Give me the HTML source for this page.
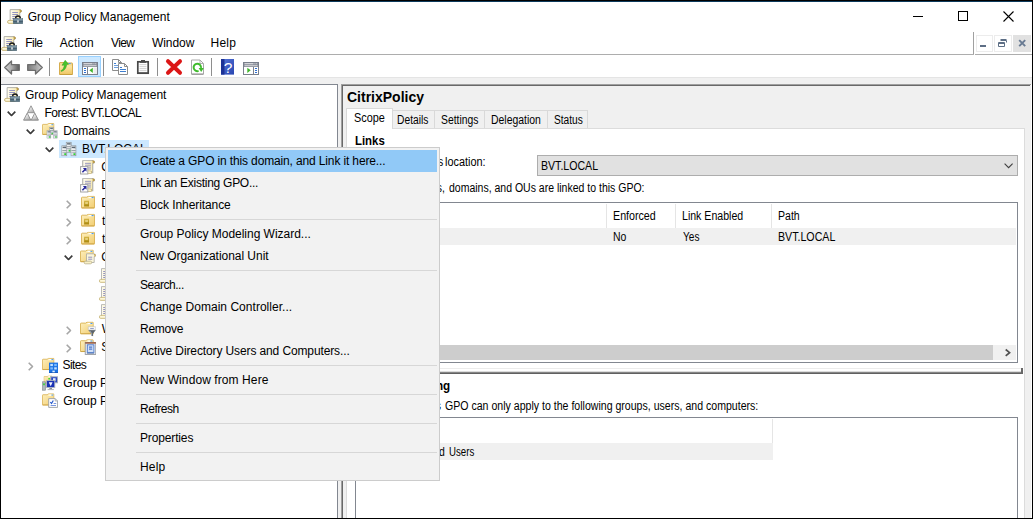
<!DOCTYPE html>
<html>
<head>
<meta charset="utf-8">
<title>Group Policy Management</title>
<style>
html,body{margin:0;padding:0;}
body{width:1033px;height:519px;position:relative;overflow:hidden;background:#fff;font-family:"Liberation Sans",sans-serif;font-size:12px;color:#000;}
.abs{position:absolute;}
.t{position:absolute;white-space:nowrap;line-height:16px;height:16px;transform-origin:0 0;}
.b{font-weight:bold;}
.ttl{font-size:14px;font-weight:bold;}
.seg{font-size:12px;}
.ms{font-size:12px;}
svg{position:absolute;overflow:visible;}
#frame{left:0;top:0;width:1033px;height:519px;box-sizing:border-box;border:1px solid #000;z-index:50;}
.msep{left:136px;width:301px;height:1px;background:#d7d7d7;}
</style>
</head>
<body>
<!-- title bar -->
<div class="abs" style="left:0;top:0;width:1033px;height:32px;background:#fff;"></div>
<svg style="left:900px;top:0;" width="133" height="32" viewBox="0 0 133 32">
  <path d="M13 16.5h10" stroke="#000" stroke-width="1" fill="none"/>
  <rect x="58.5" y="11.5" width="9" height="9" stroke="#000" stroke-width="1" fill="none"/>
  <path d="M103.5 11.5l10 10M113.5 11.5l-10 10" stroke="#000" stroke-width="1.1" fill="none"/>
</svg>
<!-- menu bar -->
<div class="abs" style="left:1px;top:32px;width:1031px;height:22px;background:#fff;"></div>
<div class="abs" style="left:1px;top:54px;width:1031px;height:1px;background:#adadad;"></div>
<div class="abs" style="left:973px;top:32px;width:1px;height:22px;background:#a0a0a0;"></div>
<div class="abs" style="left:974px;top:32px;width:58px;height:23px;background:#fff;"></div>
<div class="abs" style="left:975px;top:54px;width:57px;height:1px;background:#adadad;"></div>
<!-- MDI buttons -->
<div class="abs" style="left:976px;top:35px;width:17px;height:17px;box-sizing:border-box;border:1px solid #ececec;background:#fff;"></div>
<div class="abs" style="left:994px;top:35px;width:18px;height:17px;box-sizing:border-box;border:1px solid #ececec;background:#fff;"></div>
<div class="abs" style="left:1013px;top:35px;width:18px;height:17px;background:#e1e1e1;"></div>
<svg style="left:976px;top:35px;" width="55" height="17" viewBox="0 0 55 17">
  <rect x="4" y="10" width="6" height="2" fill="#5d6e85"/>
  <path d="M24.5 5.5h6v2M22.5 7.5h6v4h-6z" stroke="#5d6e85" stroke-width="1" fill="none"/>
  <path d="M22.5 8.5h6M24.5 4.5h6" stroke="#5d6e85" stroke-width="1" fill="none"/>
  <path d="M43.200 5.200l6 6M49.200 5.200l-6 6" stroke="#687a92" stroke-width="1.900" fill="none"/>
</svg>
<!-- toolbar -->
<div class="abs" style="left:1px;top:55px;width:1031px;height:22px;background:#fff;"></div>
<div class="abs" style="left:1px;top:77px;width:1031px;height:8px;background:#f0f0f0;"></div>
<div class="abs" style="left:1px;top:77px;width:1031px;height:1px;background:#e4e4e4;"></div>
<!-- left pane -->
<div class="abs" style="left:1px;top:84px;width:337px;height:434px;background:#fff;border-top:1px solid #828790;border-right:1px solid #828790;box-sizing:border-box;"></div>
<!-- splitter -->
<div class="abs" style="left:338px;top:84px;width:3px;height:434px;background:#f0f0f0;"></div>
<!-- right pane -->
<div class="abs" style="left:341px;top:84px;width:691px;height:434px;background:#f0f0f0;"></div>
<div class="abs" style="left:341px;top:84px;width:690px;height:1px;background:#a0a0a0;"></div>
<div class="abs" style="left:341px;top:84px;width:1px;height:434px;background:#a0a0a0;"></div>
<div class="abs" style="left:342px;top:85px;width:688px;height:1px;background:#696969;"></div>
<div class="abs" style="left:342px;top:85px;width:1px;height:433px;background:#696969;"></div>
<div class="abs" style="left:1031px;top:84px;width:1px;height:434px;background:#fff;"></div>
<!-- toolbar icons -->
<svg style="left:0;top:55px;" width="270" height="23" viewBox="0 55 270 23">
  <defs>
    <linearGradient id="ga" x1="0" y1="0" x2="0" y2="1"><stop offset="0" stop-color="#cfcfcf"/><stop offset="0.350" stop-color="#8c8c8c"/><stop offset="0.550" stop-color="#5c5c5c"/><stop offset="1" stop-color="#9c9c9c"/></linearGradient>
    <linearGradient id="gab" x1="0" y1="0" x2="1" y2="0"><stop offset="0" stop-color="#d0d0d0"/><stop offset="0.450" stop-color="#b0b0b0"/><stop offset="1" stop-color="#585858"/></linearGradient>
    <linearGradient id="gaf" x1="0" y1="0" x2="1" y2="0"><stop offset="0" stop-color="#7a7a7a"/><stop offset="0.550" stop-color="#a4a4a4"/><stop offset="1" stop-color="#d0d0d0"/></linearGradient>
    <linearGradient id="gf" x1="0" y1="0" x2="0" y2="1"><stop offset="0" stop-color="#fbe7a8"/><stop offset="1" stop-color="#efc765"/></linearGradient>
    <linearGradient id="gh" x1="0" y1="0" x2="1" y2="1"><stop offset="0" stop-color="#5676d8"/><stop offset="1" stop-color="#2744b0"/></linearGradient>
  </defs>
  <!-- back -->
  <path d="M4.700 67.500 L11.500 61 V64.700 H19.300 V70.300 H11.500 V74 Z" fill="url(#gab)" stroke="#6e6e6e" stroke-width="1.300" stroke-linejoin="round"/>
  <!-- forward -->
  <path d="M42.300 67.500 L35.500 61 V64.700 H27.700 V70.300 H35.500 V74 Z" fill="url(#gaf)" stroke="#6e6e6e" stroke-width="1.300" stroke-linejoin="round"/>
  <rect x="49" y="58" width="1" height="18" fill="#8e8e8e"/>
  <!-- up folder -->
  <path d="M59.500 63 Q59.500 62.500 60 62.500 H66 L67 63 H72 Q72.500 63 72.500 63.500 V74 Q72.500 74.500 72 74.500 H60 Q59.500 74.500 59.500 74 Z" fill="#f3d88e" stroke="#d6ad4e" stroke-width="1"/>
  <rect x="60" y="65.600" width="12" height="8.600" fill="url(#gf)"/>
  <rect x="59.500" y="74" width="13" height="0.800" fill="#c49a3a"/>
  <rect x="68.500" y="63" width="2.200" height="1" fill="#4a9cf4"/>
  <path d="M60.800 70.800 C63 70 64.200 67.500 64.300 65 L62 65.300 L65.200 60.300 L68.600 64.300 L66.600 64.600 C66.400 68 64.400 70.800 61.300 71.400 Z" fill="#46c42c" stroke="#2f9e1c" stroke-width="0.500"/>
  <!-- selected button -->
  <rect x="78.5" y="56.5" width="22" height="20" fill="#cce8ff" stroke="#99d1ff" stroke-width="1"/>
  <rect x="82.500" y="62.500" width="15" height="12" fill="#fff" stroke="#7a808c" stroke-width="1"/>
  <rect x="83" y="63" width="14" height="4" fill="#868b96"/>
  <rect x="83.500" y="63.300" width="9" height="0.900" fill="#f4f4f4"/><rect x="93.500" y="63.300" width="0.900" height="0.900" fill="#f4f4f4"/><rect x="95.300" y="63.300" width="0.900" height="0.900" fill="#f4f4f4"/>
  <rect x="83.500" y="65.300" width="13" height="0.900" fill="#e4e4e4"/>
  <rect x="87" y="67" width="1" height="7" fill="#7a808c"/>
  <rect x="84" y="68" width="2" height="1" fill="#2f6fd0"/><rect x="84" y="70" width="2" height="1" fill="#2f6fd0"/><rect x="84" y="72" width="2" height="1" fill="#2f6fd0"/>
  <path d="M92.800 67.700 v5.300 l-3.400 -2.650 z" fill="#3fb52a"/>
  <rect x="93.500" y="67.500" width="3.500" height="6.500" fill="#ececec"/>
  <rect x="103" y="58" width="1" height="18" fill="#8e8e8e"/>
  <!-- copy -->
  <path d="M112.500 59.500 h6 l3 3 v8 h-9 z" fill="#fff" stroke="#8c8c8c" stroke-width="1"/>
  <path d="M118.500 59.500 v3 h3" fill="none" stroke="#8c8c8c" stroke-width="1"/>
  <rect x="114" y="63" width="2" height="1" fill="#3f7fd0"/><rect x="114" y="65" width="4" height="1" fill="#6f9fdc"/><rect x="114" y="67" width="4" height="1" fill="#6f9fdc"/>
  <path d="M118.500 63.500 h6 l3 3 v8 h-9 z" fill="#fff" stroke="#8c8c8c" stroke-width="1"/>
  <path d="M124.500 63.500 v3 h3" fill="none" stroke="#8c8c8c" stroke-width="1"/>
  <rect x="120" y="67" width="2" height="1" fill="#3f7fd0"/><rect x="120" y="69" width="6" height="1" fill="#3f7fd0"/><rect x="120" y="71" width="6" height="1" fill="#3f7fd0"/>
  <!-- paste -->
  <rect x="137.800" y="61.800" width="10.400" height="11.400" fill="#fff" stroke="#484848" stroke-width="1.700"/>
  <rect x="137" y="72.500" width="12" height="1.500" fill="#484848"/>
  <rect x="141" y="60" width="4" height="1.200" fill="#484848"/>
  <rect x="140" y="61.500" width="6" height="1.300" fill="#484848"/>
  <rect x="139.500" y="64.300" width="7" height="0.800" fill="#c4c4c4"/><rect x="139.500" y="66.300" width="7" height="0.800" fill="#c4c4c4"/><rect x="139.500" y="68.300" width="7" height="0.800" fill="#c4c4c4"/><rect x="139.500" y="70.300" width="7" height="0.800" fill="#c4c4c4"/>
  <rect x="157" y="58" width="1" height="18" fill="#8e8e8e"/>
  <!-- delete -->
  <path d="M168 61.200 L180 72.800 M180 61.200 L168 72.800" stroke="#dc1616" stroke-width="4" stroke-linecap="round" fill="none"/>
  <!-- refresh -->
  <path d="M191.500 60 h8.500 l3.500 3.500 v10.500 h-12 z" fill="#fff" stroke="#a8a8a8" stroke-width="1"/>
  <path d="M200 60 v3.500 h3.500" fill="none" stroke="#a8a8a8" stroke-width="0.900"/>
  <rect x="191.500" y="73.800" width="12" height="0.900" fill="#8c8c8c"/>
  <path d="M201 67.800 A3.700 3.700 0 1 0 198.600 70.900" fill="none" stroke="#3fbb2c" stroke-width="2"/>
  <path d="M198.600 68 h5.200 l-2.600 4 z" fill="#3fbb2c"/>
  <rect x="211" y="58" width="1" height="18" fill="#8e8e8e"/>
  <!-- help -->
  <rect x="221" y="59" width="13" height="15.600" fill="url(#gh)"/>
  <rect x="221" y="59" width="3.500" height="15.600" fill="#1c3296"/>
  <text x="228" y="72.600" font-family="Liberation Sans" font-size="15.500" fill="#fff" text-anchor="middle">?</text>
  <!-- action pane -->
  <rect x="243.500" y="62.500" width="15" height="12" fill="#fff" stroke="#7a808c" stroke-width="1"/>
  <rect x="244" y="63" width="14" height="4" fill="#868b96"/>
  <rect x="244.500" y="63.300" width="9" height="0.900" fill="#f4f4f4"/><rect x="254.500" y="63.300" width="0.900" height="0.900" fill="#f4f4f4"/><rect x="256.300" y="63.300" width="0.900" height="0.900" fill="#f4f4f4"/>
  <rect x="244.500" y="65.300" width="13" height="0.900" fill="#e4e4e4"/>
  <rect x="253" y="67" width="1" height="7" fill="#7a808c"/>
  <rect x="255" y="68" width="2" height="1" fill="#2f6fd0"/><rect x="255" y="70" width="2" height="1" fill="#2f6fd0"/><rect x="255" y="72" width="2" height="1" fill="#2f6fd0"/>
  <path d="M247.300 67.700 v5.300 l3.400 -2.650 z" fill="#3fb52a"/>
</svg>
<!-- icon symbol defs -->
<svg width="0" height="0" style="left:0;top:0;">
  <defs>
    <linearGradient id="gfold" x1="0" y1="0" x2="1" y2="1"><stop offset="0" stop-color="#fdf0bf"/><stop offset="1" stop-color="#f2cd70"/></linearGradient>
    <linearGradient id="gscr" x1="0" y1="0" x2="1" y2="0"><stop offset="0" stop-color="#fffdf2"/><stop offset="1" stop-color="#f6e7a6"/></linearGradient>
    <linearGradient id="gtri" x1="0" y1="0" x2="0.600" y2="1"><stop offset="0" stop-color="#ffffff"/><stop offset="0.400" stop-color="#ececec"/><stop offset="1" stop-color="#b0b0b0"/></linearGradient>
    <linearGradient id="gsrv" x1="0" y1="0" x2="1" y2="0"><stop offset="0" stop-color="#eef1f4"/><stop offset="1" stop-color="#b4bcc4"/></linearGradient>
    <linearGradient id="gbox" x1="0" y1="0" x2="0" y2="1"><stop offset="0" stop-color="#8fa6b4"/><stop offset="0.450" stop-color="#5f7a8a"/><stop offset="1" stop-color="#54707f"/></linearGradient>
    <linearGradient id="gou" x1="0" y1="0" x2="0" y2="1"><stop offset="0" stop-color="#d4b444"/><stop offset="1" stop-color="#a8860c"/></linearGradient>
    <!-- scroll: 12 x 15 -->
    <symbol id="scroll" viewBox="0 0 12 15" preserveAspectRatio="none">
      <path d="M2.500 0.600 H10 Q11.600 0.600 11.600 2.100 Q11.600 3.400 10.200 3.400 V13.600 H2.500 Z" fill="url(#gscr)" stroke="#a9a9a4" stroke-width="0.800"/>
      <path d="M9.900 0.700 Q11.700 0.700 11.600 2.200 Q11.500 3.400 10.300 3.300 Q10.900 2 9.900 0.700 Z" fill="#c9a446" stroke="#b09040" stroke-width="0.400"/>
      <rect x="4.200" y="3" width="4.600" height="1" fill="#9494c0"/><rect x="4.200" y="5" width="4.600" height="1" fill="#9494c0"/><rect x="4.200" y="7" width="4.600" height="1" fill="#9494c0"/><rect x="4.200" y="9" width="4.600" height="1" fill="#9494c0"/>
      <path d="M7 11.500 H10.200 V13.600 H7 Z" fill="#b8b8b0"/>
      <path d="M1.600 11.400 H8 Q9.400 11.400 9.400 12.900 Q9.400 14.400 8 14.400 H1.600 Q0.400 14.400 0.400 12.900 Q0.400 11.400 1.600 11.400 Z" fill="#f9f0c6" stroke="#c8b67a" stroke-width="0.800"/>
      <rect x="1.500" y="12.300" width="5.500" height="0.900" fill="#fffbe6"/>
    </symbol>
    <symbol id="gpm" viewBox="0 0 16 16">
      <use href="#scroll" x="0" y="0" width="15" height="15"/>
      <path d="M8.600 9.600 Q8.600 7 11 7 Q13.400 7 13.400 9.600" fill="none" stroke="#161616" stroke-width="1.300"/>
      <rect x="6.200" y="9.700" width="9.600" height="5" fill="url(#gbox)" stroke="#4a6270" stroke-width="0.500"/>
      <rect x="6.200" y="12" width="9.600" height="0.900" fill="#465c6c"/>
      <rect x="10.300" y="11.300" width="1.400" height="2.200" fill="#f4f4f4"/>
    </symbol>
    <!-- folder: 14 x 13 -->
    <symbol id="folder" viewBox="0 0 14 13" preserveAspectRatio="none">
      <path d="M0.500 2.200 Q0.500 1.500 1.200 1.500 H5.800 L7.200 0.500 H12.800 Q13.500 0.500 13.500 1.200 V12 Q13.500 12.500 13 12.500 H1 Q0.500 12.500 0.500 12 Z" fill="url(#gfold)" stroke="#d9b152" stroke-width="0.900"/>
      <path d="M6.300 2.600 L7.500 1.300 H12.700 V2.600 Z" fill="#fff6d0"/>
      <rect x="8.200" y="1.300" width="2.400" height="1.100" fill="#ffffff"/>
      <rect x="10.600" y="1.300" width="2" height="1.100" fill="#4a9cf4"/>
      <rect x="0.800" y="11.800" width="12.400" height="0.800" fill="#c9a040"/>
    </symbol>
    <symbol id="forest" viewBox="0 0 16 16">
      <path d="M8 0.800 L11.500 7.700 H4.500 Z" fill="url(#gtri)" stroke="#8c8c8c" stroke-width="0.900" stroke-linejoin="round"/>
      <path d="M4.200 8.100 L7.800 15.100 H0.600 Z" fill="url(#gtri)" stroke="#8c8c8c" stroke-width="0.900" stroke-linejoin="round"/>
      <path d="M11.800 8.100 L15.400 15.100 H8.200 Z" fill="url(#gtri)" stroke="#8c8c8c" stroke-width="0.900" stroke-linejoin="round"/>
      <rect x="0.600" y="14.800" width="14.800" height="0.700" fill="#9a9a9a"/>
    </symbol>
    <symbol id="srv" viewBox="0 0 6 11" preserveAspectRatio="none">
      <rect x="0.400" y="0.400" width="5.200" height="10.200" fill="url(#gsrv)" stroke="#8d969e" stroke-width="0.800"/>
      <rect x="1.300" y="1.500" width="3.400" height="1.100" fill="#4e5a66"/>
      <rect x="1" y="3.600" width="4" height="1" fill="#ffffff"/>
      <rect x="1" y="5.400" width="4" height="1" fill="#ffffff"/>
      <rect x="1" y="4.600" width="4" height="0.800" fill="#7e8892"/>
      <rect x="1" y="6.500" width="4" height="0.700" fill="#9aa4ac"/>
      <rect x="3" y="8" width="1.800" height="1.700" fill="#2fd82f"/>
    </symbol>
    <symbol id="domain" viewBox="0 0 16 16">
      <use href="#srv" x="4.700" y="0.800" width="6" height="11"/>
      <use href="#srv" x="0.300" y="4.300" width="6" height="11"/>
      <use href="#srv" x="9.500" y="4.300" width="6" height="11"/>
    </symbol>
    <symbol id="domains" viewBox="0 0 16 16">
      <use href="#folder" x="0" y="0" width="12.500" height="12"/>
      <use href="#srv" x="7.200" y="4" width="4.600" height="8"/>
      <use href="#srv" x="4.500" y="7.300" width="4.800" height="8.300"/>
      <use href="#srv" x="10.800" y="7.300" width="4.800" height="8.300"/>
    </symbol>
    <symbol id="gpolink" viewBox="0 0 16 16">
      <use href="#scroll" x="-0.500" y="1" width="15.600" height="14.200"/>
      <rect x="0.600" y="7.600" width="7.200" height="7.400" fill="#fff" stroke="#a4a4a4" stroke-width="1"/>
      <path d="M2.400 13.200 L5.400 10.200" fill="none" stroke="#28289a" stroke-width="1.600"/>
      <path d="M2.800 9 H6.500 V12.700 Z" fill="#28289a"/>
    </symbol>
    <symbol id="ou" viewBox="0 0 16 16">
      <use href="#folder" x="1" y="0.700" width="14" height="13"/>
      <rect x="4.100" y="5.700" width="4.900" height="5.800" fill="url(#gou)"/>
      <rect x="5.200" y="6.900" width="2.700" height="2.200" fill="#ecd88c" opacity="0.850"/>
    </symbol>
    <symbol id="gpofolder" viewBox="0 0 16 16">
      <use href="#folder" x="0" y="0.500" width="13.800" height="13"/>
      <path d="M6.500 4.800 H13.600 Q15.700 4.800 15.700 6.500 Q15.700 7.700 14.200 7.700 V13.500 H6.500 Z" fill="#fbf6dc" stroke="#a9a9a4" stroke-width="0.800"/>
      <path d="M13.700 4.900 Q15.800 4.900 15.700 6.500 Q15.600 7.700 14.300 7.600 Q14.800 6.200 13.700 4.900 Z" fill="#c9a446"/>
      <rect x="8.200" y="7.700" width="4" height="1" fill="#9494c0"/><rect x="8.200" y="9.700" width="4" height="1" fill="#9494c0"/>
      <path d="M5.200 12.200 H10.500 Q11.700 12.200 11.700 13.500 Q11.700 14.800 10.500 14.800 H5.200 Q4.200 14.800 4.200 13.500 Q4.200 12.200 5.200 12.200 Z" fill="#f9f0c6" stroke="#b9b08a" stroke-width="0.800"/>
    </symbol>
    <symbol id="wmi" viewBox="0 0 16 16">
      <use href="#folder" x="0" y="0.600" width="13.800" height="13"/>
      <path d="M8.300 9 H15.800 L13.100 12.600 V15.300 L11 14.300 V12.600 Z" fill="#5c646c"/>
      <path d="M9.600 9.800 L11.600 12.400 V14" fill="none" stroke="#c4cad0" stroke-width="0.800"/>
      <rect x="8.300" y="5.700" width="7.500" height="3.200" rx="0.500" fill="#fafafa" stroke="#b8bcc0" stroke-width="0.600"/>
      <rect x="10.200" y="7" width="3.600" height="0.900" fill="#8a96c0"/>
    </symbol>
    <symbol id="starter" viewBox="0 0 16 16">
      <use href="#folder" x="0" y="0.200" width="13.800" height="13"/>
      <rect x="5.200" y="3.400" width="10.600" height="12" fill="#e9edf2" stroke="#8c9096" stroke-width="0.800"/>
      <rect x="5.200" y="3.200" width="10.600" height="1.500" fill="#9c5a3c"/>
      <rect x="7.300" y="5.800" width="6.600" height="7.700" fill="#d2e0f6" stroke="#4a78cc" stroke-width="0.900"/>
      <rect x="9" y="7.600" width="3.200" height="1" fill="#2f5fc0"/><rect x="9" y="9.600" width="3.200" height="1" fill="#2f5fc0"/>
      <rect x="7" y="13.800" width="7.200" height="1" fill="#7a8fb8"/>
    </symbol>
    <symbol id="sites" viewBox="0 0 16 16">
      <use href="#folder" x="0" y="0.800" width="12.500" height="12.400"/>
      <rect x="7" y="5.600" width="9" height="10.400" fill="#1e74e4"/>
      <rect x="8.300" y="6.900" width="2.600" height="2.200" fill="#c4e2ff"/><rect x="12.200" y="6.900" width="2.600" height="2.200" fill="#7cbcff"/>
      <rect x="8.300" y="10.300" width="2.600" height="2.200" fill="#7cbcff"/><rect x="12.200" y="10.300" width="2.600" height="2.200" fill="#c4e2ff"/>
      <rect x="10.400" y="13.600" width="2.400" height="2.400" fill="#e0f0ff"/>
      <rect x="7" y="15.300" width="9" height="0.700" fill="#1454b4"/>
    </symbol>
    <symbol id="modeling" viewBox="0 0 16 16">
      <use href="#folder" x="1.500" y="0.500" width="9" height="8.500"/>
      <rect x="8.800" y="1.800" width="6.800" height="6" fill="#2a48c4" stroke="#aab2ba" stroke-width="0.900"/>
      <rect x="11" y="3.200" width="2.600" height="2.600" fill="#e4ecfc"/>
      <rect x="4.400" y="5.400" width="8.400" height="7.200" fill="#1a32b4" stroke="#b4bac0" stroke-width="0.900"/>
      <path d="M6.800 7.300 h3.800 l-1.900 3.900 z" fill="#f4f7ff"/>
      <rect x="7.400" y="13" width="2.600" height="1" fill="#8a9096"/><rect x="5.600" y="14" width="6.200" height="1.100" fill="#b4b8bc"/>
      <rect x="0.500" y="6.800" width="3" height="8.400" fill="#b0b8be" stroke="#7e868c" stroke-width="0.600"/>
      <rect x="1.200" y="8.400" width="1.600" height="1.800" fill="#2fd82f"/>
      <rect x="6.400" y="3" width="1.500" height="1.500" fill="#2fd82f"/>
    </symbol>
    <symbol id="results" viewBox="0 0 16 16">
      <use href="#folder" x="0" y="0.300" width="12.500" height="12.400"/>
      <path d="M6.700 5.600 H13.200 L15.600 8 V14.400 H6.700 Z" fill="#fff" stroke="#9a9ea4" stroke-width="0.900"/>
      <path d="M13.200 5.600 V8 H15.600" fill="none" stroke="#9a9ea4" stroke-width="0.700"/>
      <path d="M8.300 9 L9.500 10.500 L11.300 7.500" fill="none" stroke="#2458cc" stroke-width="1.200"/>
      <rect x="11.600" y="10" width="2.600" height="0.900" fill="#6a8ad8"/><rect x="8.600" y="12" width="5.400" height="0.900" fill="#6a8ad8"/>
    </symbol>
    <symbol id="chd" viewBox="0 0 9 5.500">
      <path d="M0.700 0.700 L4.500 4.500 L8.300 0.700" fill="none" stroke="#3c3c3c" stroke-width="1.700"/>
    </symbol>
    <symbol id="chr" viewBox="0 0 5.500 9">
      <path d="M0.700 0.700 L4.500 4.500 L0.700 8.300" fill="none" stroke="#a6a6a6" stroke-width="1.600"/>
    </symbol>
  </defs>
</svg>
<!-- title + menu app icons -->
<svg style="left:7px;top:9px;" width="16" height="16"><use href="#gpm" width="16" height="16"/></svg>
<svg style="left:1.2px;top:36px;" width="16" height="16"><use href="#gpm" width="16" height="16"/></svg>
<!-- tree -->
<div class="abs" style="left:59px;top:140px;width:90px;height:18px;background:#cce8ff;"></div>
<svg style="left:4px;top:87px;" width="16" height="16"><use href="#gpm" width="16" height="16"/></svg>
<svg style="left:6.8px;top:110.8px;" width="9" height="5.500"><use href="#chd" width="9" height="5.500"/></svg>
<svg style="left:23px;top:104.600px;" width="16" height="16"><use href="#forest" width="16" height="16"/></svg>
<svg style="left:25.8px;top:128.8px;" width="9" height="5.500"><use href="#chd" width="9" height="5.500"/></svg>
<svg style="left:42px;top:123px;" width="16" height="16"><use href="#domains" width="16" height="16"/></svg>
<svg style="left:45.2px;top:146.8px;" width="9" height="5.500"><use href="#chd" width="9" height="5.500"/></svg>
<svg style="left:61px;top:141px;" width="16" height="16"><use href="#domain" width="16" height="16"/></svg>
<svg style="left:80px;top:159px;" width="16" height="16"><use href="#gpolink" width="16" height="16"/></svg>
<svg style="left:80px;top:177px;" width="16" height="16"><use href="#gpolink" width="16" height="16"/></svg>
<svg style="left:66.1px;top:200.0px;" width="5.500" height="9"><use href="#chr" width="5.500" height="9"/></svg>
<svg style="left:80px;top:195px;" width="16" height="16"><use href="#ou" width="16" height="16"/></svg>
<svg style="left:66.1px;top:218.0px;" width="5.500" height="9"><use href="#chr" width="5.500" height="9"/></svg>
<svg style="left:80px;top:213px;" width="16" height="16"><use href="#ou" width="16" height="16"/></svg>
<svg style="left:66.1px;top:236.0px;" width="5.500" height="9"><use href="#chr" width="5.500" height="9"/></svg>
<svg style="left:80px;top:231px;" width="16" height="16"><use href="#ou" width="16" height="16"/></svg>
<svg style="left:63.8px;top:254.8px;" width="9" height="5.500"><use href="#chd" width="9" height="5.500"/></svg>
<svg style="left:80px;top:249px;" width="16" height="16"><use href="#gpofolder" width="16" height="16"/></svg>
<svg style="left:99px;top:268px;" width="12" height="15"><use href="#scroll" width="12" height="15"/></svg>
<svg style="left:99px;top:286px;" width="12" height="15"><use href="#scroll" width="12" height="15"/></svg>
<svg style="left:99px;top:304px;" width="12" height="15"><use href="#scroll" width="12" height="15"/></svg>
<svg style="left:66.1px;top:326.0px;" width="5.500" height="9"><use href="#chr" width="5.500" height="9"/></svg>
<svg style="left:80px;top:321px;" width="16" height="16"><use href="#wmi" width="16" height="16"/></svg>
<svg style="left:66.1px;top:344.0px;" width="5.500" height="9"><use href="#chr" width="5.500" height="9"/></svg>
<svg style="left:80px;top:339px;" width="16" height="16"><use href="#starter" width="16" height="16"/></svg>
<svg style="left:28.1px;top:362.0px;" width="5.500" height="9"><use href="#chr" width="5.500" height="9"/></svg>
<svg style="left:42px;top:357px;" width="16" height="16"><use href="#sites" width="16" height="16"/></svg>
<svg style="left:42px;top:375px;" width="16" height="16"><use href="#modeling" width="16" height="16"/></svg>
<svg style="left:42px;top:393px;" width="16" height="16"><use href="#results" width="16" height="16"/></svg>
<!-- chrome+tree text -->
<div class="t seg" style="left:27.70px;top:9px;">Group Policy Management</div>
<div class="t seg" style="left:25.20px;top:35px;letter-spacing:-0.500px;">File</div>
<div class="t seg" style="left:59.70px;top:35px;letter-spacing:0.140px;">Action</div>
<div class="t seg" style="left:111.00px;top:35px;letter-spacing:-0.600px;">View</div>
<div class="t seg" style="left:152.00px;top:35px;letter-spacing:-0.060px;">Window</div>
<div class="t seg" style="left:210.50px;top:35px;letter-spacing:0.233px;">Help</div>
<div class="t seg" style="left:25.00px;top:87px;letter-spacing:-0.032px;">Group Policy Management</div>
<div class="t seg" style="left:44.50px;top:105px;letter-spacing:-0.513px;">Forest: BVT.LOCAL</div>
<div class="t seg" style="left:63.20px;top:123px;letter-spacing:-0.083px;">Domains</div>
<div class="t seg" style="left:82.00px;top:141px;">BVT.LOCAL</div>
<div class="t seg" style="left:101.20px;top:159px;">CitrixPolicy</div>
<div class="t seg" style="left:101.20px;top:177px;">Default Domain Policy</div>
<div class="t seg" style="left:101.20px;top:195px;">Domain Controllers</div>
<div class="t seg" style="left:102.00px;top:213px;">test</div>
<div class="t seg" style="left:102.00px;top:231px;">test2</div>
<div class="t seg" style="left:101.20px;top:249px;">Group Policy Objects</div>
<div class="t seg" style="left:101.80px;top:321px;">WMI Filters</div>
<div class="t seg" style="left:101.20px;top:339px;">Starter GPOs</div>
<div class="t seg" style="left:62.60px;top:357px;letter-spacing:-0.600px;">Sites</div>
<div class="t seg" style="left:63.30px;top:375px;">Group Policy Modeling</div>
<div class="t seg" style="left:63.30px;top:393px;">Group Policy Results</div>
<!-- right pane content -->
<!-- tab page -->
<div class="abs" style="left:346px;top:128px;width:679px;height:391px;background:#fff;border:1px solid #dcdcdc;box-sizing:border-box;"></div>
<!-- tabs -->
<div class="abs" style="left:390px;top:110px;width:198px;height:18px;background:#f0f0f0;border:1px solid #d9d9d9;border-bottom:none;box-sizing:border-box;"></div>
<div class="abs" style="left:434px;top:110px;width:1px;height:18px;background:#d9d9d9;"></div>
<div class="abs" style="left:484px;top:110px;width:1px;height:18px;background:#d9d9d9;"></div>
<div class="abs" style="left:547px;top:110px;width:1px;height:18px;background:#d9d9d9;"></div>
<div class="abs" style="left:346px;top:108px;width:47px;height:21px;background:#fff;border:1px solid #d9d9d9;border-bottom:none;box-sizing:border-box;"></div>
<!-- combo -->
<div class="abs" style="left:537px;top:155px;width:481px;height:21px;background:#e1e1e1;border:1px solid #adadad;box-sizing:border-box;"></div>
<svg style="left:1004.400px;top:163px;" width="10" height="6"><path d="M0.600 0.600 L4.600 4.600 L8.600 0.600" fill="none" stroke="#404040" stroke-width="1.100"/></svg>
<!-- list 1 -->
<div class="abs" style="left:355px;top:202px;width:663px;height:161px;background:#fff;border:1px solid #828790;box-sizing:border-box;"></div>
<div class="abs" style="left:606px;top:204px;width:1px;height:24px;background:#e5e5e5;"></div>
<div class="abs" style="left:675px;top:204px;width:1px;height:24px;background:#e5e5e5;"></div>
<div class="abs" style="left:771px;top:204px;width:1px;height:24px;background:#e5e5e5;"></div>
<div class="abs" style="left:356px;top:228px;width:660px;height:17px;background:#f0f0f0;"></div>
<!-- hscroll -->
<div class="abs" style="left:356px;top:345px;width:660px;height:15px;background:#f0f0f0;"></div>
<div class="abs" style="left:373px;top:345px;width:620px;height:15px;background:#cdcdcd;"></div>
<svg style="left:1005px;top:349px;" width="6" height="8"><path d="M0.700 0.500 L4.600 3.700 L0.700 6.900" fill="none" stroke="#505050" stroke-width="1.700"/></svg>
<!-- horizontal splitter -->
<div class="abs" style="left:347px;top:368px;width:676px;height:1px;background:#ececec;"></div>
<div class="abs" style="left:347px;top:371px;width:676px;height:1px;background:#dcdcdc;"></div>
<div class="abs" style="left:347px;top:372px;width:676px;height:1px;background:#858585;"></div>
<div class="abs" style="left:347px;top:373px;width:676px;height:1px;background:#606060;"></div>
<div class="abs" style="left:1021px;top:368px;width:2px;height:6px;background:#686868;"></div>
<!-- list 2 -->
<div class="abs" style="left:355px;top:417px;width:663px;height:110px;background:#fff;border:1px solid #828790;box-sizing:border-box;"></div>
<div class="abs" style="left:772px;top:419px;width:1px;height:24px;background:#e5e5e5;"></div>
<div class="abs" style="left:356px;top:443px;width:417px;height:17px;background:#f0f0f0;"></div>
<!-- right text -->
<div class="t ttl" style="left:346.50px;top:89px;transform:scaleX(0.9993);">CitrixPolicy</div>
<div class="t ms" style="left:353.84px;top:110px;transform:scaleX(0.9076);">Scope</div>
<div class="t ms" style="left:397.14px;top:112px;transform:scaleX(0.8557);">Details</div>
<div class="t ms" style="left:440.89px;top:112px;transform:scaleX(0.8619);">Settings</div>
<div class="t ms" style="left:491.38px;top:112px;transform:scaleX(0.8696);">Delegation</div>
<div class="t ms" style="left:554.15px;top:112px;transform:scaleX(0.8470);">Status</div>
<div class="t ms b" style="left:355.30px;top:133px;transform:scaleX(0.9483);">Links</div>
<div class="t ms" style="left:355.13px;top:154px;transform:scaleX(0.8700);">Display links in this</div>
<div class="t ms" style="left:445.19px;top:154px;transform:scaleX(0.9070);">location:</div>
<div class="t ms" style="left:541.37px;top:158px;transform:scaleX(0.8820);">BVT.LOCAL</div>
<div class="t ms" style="left:356.33px;top:180px;transform:scaleX(0.8700);">The following sites,</div>
<div class="t ms" style="left:449.00px;top:180px;transform:scaleX(0.8748);">domains, and OUs are linked to this GPO:</div>
<div class="t ms" style="left:613.11px;top:208px;transform:scaleX(0.8902);">Enforced</div>
<div class="t ms" style="left:682.12px;top:208px;transform:scaleX(0.8816);">Link Enabled</div>
<div class="t ms" style="left:777.87px;top:208px;transform:scaleX(0.8783);">Path</div>
<div class="t ms" style="left:613.13px;top:229px;transform:scaleX(0.8714);">No</div>
<div class="t ms" style="left:683.00px;top:229px;transform:scaleX(0.8395);">Yes</div>
<div class="t ms" style="left:777.86px;top:229px;transform:scaleX(0.8859);">BVT.LOCAL</div>
<div class="t ms b" style="left:355.28px;top:378px;transform:scaleX(0.9708);">Security Filtering</div>
<div class="t ms" style="left:354.20px;top:398px;transform:scaleX(0.8700);">The settings in this</div>
<div class="t ms" style="left:445.12px;top:398px;transform:scaleX(0.8812);">GPO can only apply to the following groups, users, and computers:</div>
<div class="t ms" style="left:381.19px;top:444px;transform:scaleX(0.8700);">Authenticated</div>
<div class="t ms" style="left:448.69px;top:444px;transform:scaleX(0.8067);">Users</div>
<!-- context menu -->
<div class="abs" style="left:105px;top:147px;width:335px;height:334px;background:#f2f2f2;border:1px solid #cccccc;box-sizing:border-box;"></div>
<div class="abs" style="left:108px;top:150px;width:329px;height:22px;background:#91c9f7;"></div>
<div class="abs msep" style="top:219px;"></div>
<div class="abs msep" style="top:270px;"></div>
<div class="abs msep" style="top:365px;"></div>
<div class="abs msep" style="top:394px;"></div>
<div class="abs msep" style="top:423px;"></div>
<div class="abs msep" style="top:452px;"></div>
<!-- menu text -->
<div class="t seg" style="left:140.00px;top:153px;letter-spacing:-0.140px;">Create a GPO in this domain, and Link it here...</div>
<div class="t seg" style="left:140.00px;top:175px;letter-spacing:-0.255px;">Link an Existing GPO...</div>
<div class="t seg" style="left:140.00px;top:197px;letter-spacing:-0.081px;">Block Inheritance</div>
<div class="t seg" style="left:140.00px;top:226px;letter-spacing:-0.020px;">Group Policy Modeling Wizard...</div>
<div class="t seg" style="left:140.00px;top:248px;letter-spacing:-0.036px;">New Organizational Unit</div>
<div class="t seg" style="left:140.00px;top:277px;letter-spacing:-0.475px;">Search...</div>
<div class="t seg" style="left:140.00px;top:299px;letter-spacing:0.027px;">Change Domain Controller...</div>
<div class="t seg" style="left:140.00px;top:321px;letter-spacing:-0.260px;">Remove</div>
<div class="t seg" style="left:140.20px;top:343px;letter-spacing:-0.118px;">Active Directory Users and Computers...</div>
<div class="t seg" style="left:140.00px;top:372px;letter-spacing:0.089px;">New Window from Here</div>
<div class="t seg" style="left:140.00px;top:401px;letter-spacing:-0.467px;">Refresh</div>
<div class="t seg" style="left:140.00px;top:430px;letter-spacing:-0.144px;">Properties</div>
<div class="t seg" style="left:140.00px;top:459px;letter-spacing:0.150px;">Help</div>
<div class="abs" style="left:1px;top:1px;width:1031px;height:1px;background:#0c3a5c;z-index:51;"></div>
<div class="abs" id="frame"></div>
</body>
</html>
